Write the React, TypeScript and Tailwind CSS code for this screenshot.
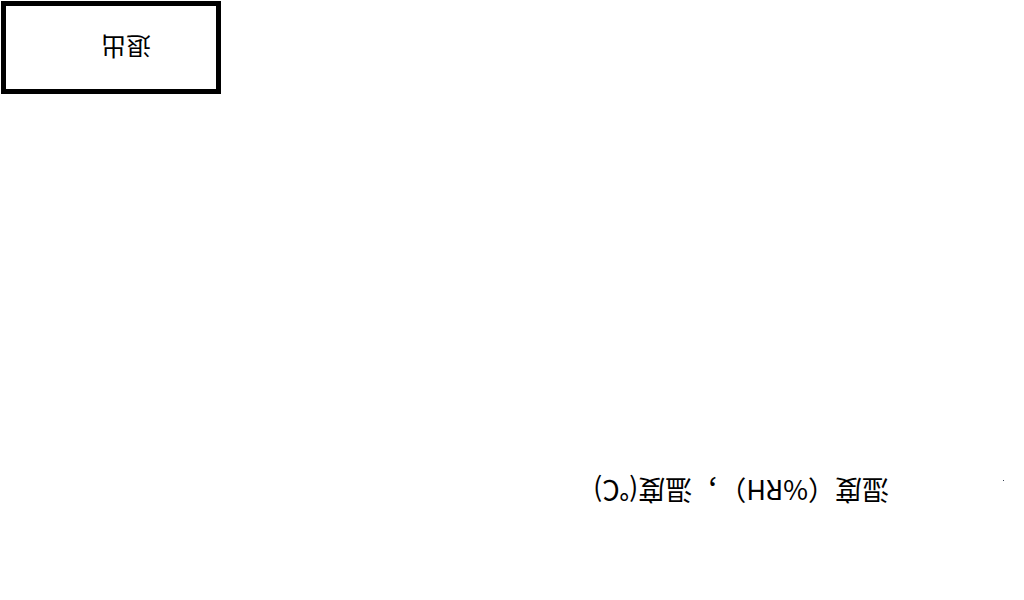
import React from 'react';

const FONT = "font-['Noto_Sans_CJK_SC','Noto_Sans',sans-serif]";

export default function App() {
  return (
    <div className={`w-[1024px] h-[600px] bg-white overflow-hidden rotate-180 ${FONT}`}>
      <div className="flex h-full flex-col justify-between">
        {/* Chart header */}
        <div className="relative pt-[90px] pl-[135px]">
          <span className="absolute left-[20px] top-[119px] h-px w-px bg-gray-700" />
          <p className="text-[27px] leading-[38px] text-black [text-spacing-trim:space-all]">
            湿度（%RH），温度(℃)
          </p>
        </div>

        {/* Exit button */}
        <div className="flex justify-end pr-px pb-px">
          <button className="flex h-[93px] w-[220px] items-center justify-center border-[5px] border-black bg-white pr-[30px] text-[25px] leading-none text-black">
            退出
          </button>
        </div>
      </div>
    </div>
  );
}
